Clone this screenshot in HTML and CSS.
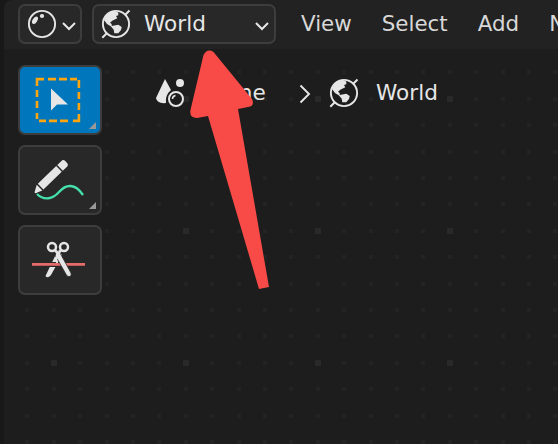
FILE: index.html
```html
<!DOCTYPE html>
<html lang="en">
<head>
<meta charset="utf-8">
<title>Shader Editor</title>
<link rel="stylesheet" href="styles.css">
</head>
<body>
<svg class="defs" aria-hidden="true">
  <symbol id="globe" viewBox="0 0 30 30">
    <path d="M1.300 28.700 5.500 24.500M24 6l4.500-4.500" fill="none" stroke="currentColor" stroke-width="2"/>
    <circle cx="15" cy="15" r="13.100" fill="none" stroke="currentColor" stroke-width="1.900"/>
    <path d="M3 11C5 6 9 2 14 2l3.300 1.500v2.800L15 7l1.300 2.300-5 2.400-2.300 2 1.700 1.300v2l2.600-.5 4-.7 3.400 2.200-.7 3-2.700 3.300h-4l-.6-3.500-2.700-3.300L6 15z" fill="currentColor"/>
  </symbol>
  <symbol id="chevron" viewBox="0 0 16 10"><path d="m2 2 6 6 6-6" fill="none" stroke="currentColor" stroke-width="2"/></symbol>
</svg>
<div class="editor">
  <header class="header">
    <div class="select editor-type">
      <svg class="icon" viewBox="0 0 30 30"><circle cx="15" cy="15" r="13.100" fill="none" stroke="currentColor" stroke-width="1.900"/><ellipse cx="8" cy="11.300" rx="2.300" ry="4.100" transform="rotate(32 8 11.300)" fill="currentColor"/><circle cx="15" cy="7" r="2.100" fill="currentColor"/></svg>
      <svg class="chevron"><use href="#chevron"/></svg>
    </div>
    <div class="select shader-type">
      <svg class="icon"><use href="#globe"/></svg>
      <span class="label">World</span>
      <svg class="chevron"><use href="#chevron"/></svg>
    </div>
    <nav class="menu"><span>View</span><span>Select</span><span>Add</span><span>Node</span></nav>
  </header>
  <main class="canvas">
    <svg class="dots" aria-hidden="true">
      <defs><pattern id="grid" x="47" y="47" width="132" height="132" patternUnits="userSpaceOnUse">
        <path d="M27 1h4v4h-4zM54 1h4v4h-4zM80 1h4v4h-4zM106 1h4v4h-4zM1 27h4v4h-4zM27 27h4v4h-4zM54 27h4v4h-4zM80 27h4v4h-4zM106 27h4v4h-4zM1 54h4v4h-4zM27 54h4v4h-4zM54 54h4v4h-4zM80 54h4v4h-4zM106 54h4v4h-4zM1 80h4v4h-4zM27 80h4v4h-4zM54 80h4v4h-4zM80 80h4v4h-4zM106 80h4v4h-4zM1 106h4v4h-4zM27 106h4v4h-4zM54 106h4v4h-4zM80 106h4v4h-4zM106 106h4v4h-4z" fill="#232323"/>
        <path d="M0 0h6v6H0z" fill="#292929"/>
      </pattern></defs>
      <rect width="554" height="395" fill="url(#grid)"/>
    </svg>
    <aside class="tools">
      <div class="tool active">
        <svg viewBox="0 0 84 70"><g fill="none" stroke="#ffa510" stroke-width="2.600"><path d="M19 21v-6.900h7M30 14.100h8M41 14.100h8M52 14.100h7M60.900 15v8M60.900 27v7M60.900 38v7M60.900 49v6.900h-6M50 55.900h-8M39 55.900h-8M28 55.900h-7M19 54v-6M19 43v-7M19 32v-7"/></g><path d="M33 23.500v22l6-6h11z" fill="#e6e6e6"/><path class="corner" d="M78 57v7h-7z"/></svg>
      </div>
      <div class="tool">
        <svg viewBox="0 0 84 70"><path d="M19 49c7 7 16 5 22-2 7-8 16-9 24 3" fill="none" stroke="#45dfac" stroke-width="2.300"/><g transform="translate(16.500 47.500) rotate(-44)" fill="#e6e6e6"><path d="M0 0 7-4v8L2 2Q0 2 0 0M8.500-4H34v8H8.500zM35.500-4H41q3 0 3 3v2q0 3-3 3h-5.500z"/></g><path class="corner" d="M78 57v7h-7z"/></svg>
      </div>
      <div class="tool">
        <svg viewBox="0 0 84 70"><path d="m40 25 4 5-11 20q-3.500 4-5.500 1z" fill="#e6e6e6"/><path d="M28 37h10v5H28z" fill="#282828"/><path d="M14 39.400h53" stroke="#e66b6b" stroke-width="2.800"/><path d="m37 30 4-4L53 48q1 5-4 3z" fill="#e6e6e6" stroke="#282828" stroke-width=".8"/><path d="m35 37 5-9 4 8-4-3-2 4z" fill="#e6e6e6"/><g fill="none" stroke="#e6e6e6" stroke-width="2.500"><circle cx="34" cy="22" r="4"/><circle cx="46" cy="22" r="4"/><path d="m37 25 3 4 3-4"/></g></svg>
      </div>
    </aside>
    <div class="breadcrumb">
      <svg class="scene-icon" viewBox="0 0 30 30"><path d="M9 1 15 12Q9 17 10 25 1 26 0 20z" fill="currentColor"/><circle cx="24" cy="5" r="4" fill="currentColor"/><circle cx="20" cy="21" r="7" fill="none" stroke="currentColor" stroke-width="2"/><path d="M16.500 21q0-3 3-3.500" fill="none" stroke="currentColor" stroke-width="1.500"/></svg>
      <span class="scene">Scene</span>
      <svg class="separator" viewBox="0 0 12 20"><path d="m1.500 1.500 8.500 8.500-8.500 8.500" fill="none" stroke="currentColor" stroke-width="1.900"/></svg>
      <svg class="icon"><use href="#globe"/></svg>
      <span class="world">World</span>
    </div>
  </main>
  <svg class="arrow" viewBox="0 0 558 444"><path d="M203.500 55Q207.500 48 213.500 52L252 99Q255 106 248 107L238 109 269 287 259 289 208 116 197 118Q189 118 190.500 110z" fill="#f84b47"/></svg>
</div>
</body>
</html>
```
FILE: styles.css
```css
* { box-sizing: border-box; }
body {
  margin: 0;
  background: #181818;
  color: #e6e6e6;
  font: 21.6px/30px "DejaVu Sans", sans-serif;
}
svg { display: block; flex: none; }
.defs { position: absolute; width: 0; height: 0; }
.editor {
  position: relative;
  width: 558px;
  height: 444px;
  padding-left: 4px;
  overflow: hidden;
}
.header {
  display: flex;
  height: 49px;
  padding: 4px 0 5px 14px;
  gap: 10px;
  background: #222;
  border-top-left-radius: 8px;
}
.select {
  display: flex;
  flex: none;
  align-items: center;
  height: 40px;
  border: 2px solid #3d3d3d;
  border-radius: 7px;
  background: #282828;
}
.editor-type { width: 64px; padding-left: 7px; gap: 4px; }
.shader-type { width: 184px; padding-left: 7px; }
.icon { width: 30px; height: 30px; }
.chevron { width: 16px; height: 10px; margin-top: 3px; }
.label { width: 109px; margin-left: 13px; }
.shader-type .chevron { margin-left: 1px; }
.menu {
  display: flex;
  flex: none;
  gap: 30px;
  margin-left: 15px;
  padding-top: 5px;
  color: #d8d8d8;
  font-size: 21.4px;
  white-space: nowrap;
}
.canvas {
  position: relative;
  display: flex;
  height: 395px;
  background: #1d1d1d;
}
.dots { position: absolute; inset: 0; width: 554px; height: 395px; }
.tools {
  position: relative;
  display: flex;
  flex-direction: column;
  gap: 10px;
  width: 98px;
  padding: 16px 0 0 14px;
}
.tool {
  width: 84px;
  height: 70px;
  border: 2px solid #3d3d3d;
  border-radius: 7px;
  background: #282828;
}
.tool.active { background: #0076bd; }
.tool svg { width: 84px; height: 70px; margin: -2px; }
.corner { fill: #999; }
.breadcrumb {
  position: relative;
  display: flex;
  align-items: center;
  height: 30px;
  margin: 29px 0 0 54px;
}
.scene-icon { width: 30px; height: 30px; }
.scene { width: 82px; margin-left: 14px; }
.separator { width: 12px; height: 20px; margin: 2px 18px 0 17px; }
.world { margin-left: 17px; }
.arrow { position: absolute; inset: 0; width: 558px; height: 444px; }
```
